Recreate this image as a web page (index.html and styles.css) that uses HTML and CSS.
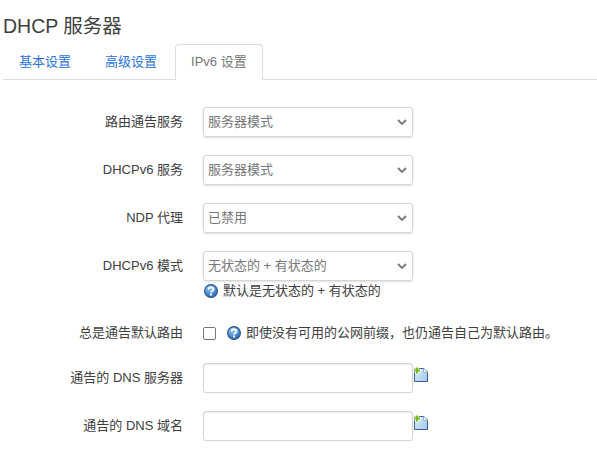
FILE: index.html
```html
<!DOCTYPE html>
<html lang="zh">
<head>
<meta charset="utf-8">
<title>DHCP 服务器</title>
<link rel="stylesheet" href="styles.css">
</head>
<body>
<h2 class="title">DHCP 服务器</h2>
<ul class="tabs">
  <li class="tab"><a href="#">基本设置</a></li>
  <li class="tab"><a href="#">高级设置</a></li>
  <li class="tab active"><a href="#">IPv6 设置</a></li>
</ul>
<div class="form">
  <div class="row">
    <label class="label">路由通告服务</label>
    <div class="field"><select class="select"><option>服务器模式</option></select></div>
  </div>
  <div class="row">
    <label class="label">DHCPv6 服务</label>
    <div class="field"><select class="select"><option>服务器模式</option></select></div>
  </div>
  <div class="row">
    <label class="label">NDP 代理</label>
    <div class="field"><select class="select"><option>已禁用</option></select></div>
  </div>
  <div class="row row-hint">
    <label class="label">DHCPv6 模式</label>
    <div class="field">
      <select class="select"><option>无状态的 + 有状态的</option></select>
      <div class="hint">
        <svg class="help help-hint" viewBox="0 0 14 14">
          <circle cx="7" cy="7" r="6.4" fill="url(#qg)" stroke="#24558f" stroke-width="1.1"/>
          <path d="M4.6 5.6c0-1.5 1.1-2.2 2.4-2.2 1.4 0 2.5.8 2.5 2 0 1.6-2.4 1.6-2.4 3.2" fill="none" stroke="#fff" stroke-width="1.7"/>
          <rect x="6" y="9.5" width="2" height="2" fill="#fff"/>
        </svg>
        <span>默认是无状态的 + 有状态的</span>
      </div>
    </div>
  </div>
  <div class="row row-check">
    <label class="label">总是通告默认路由</label>
    <div class="field check-field">
      <input class="check" type="checkbox">
      <svg class="help" viewBox="0 0 14 14">
        <circle cx="7" cy="7" r="6.4" fill="url(#qg)" stroke="#24558f" stroke-width="1.1"/>
        <path d="M4.6 5.6c0-1.5 1.1-2.2 2.4-2.2 1.4 0 2.5.8 2.5 2 0 1.6-2.4 1.6-2.4 3.2" fill="none" stroke="#fff" stroke-width="1.7"/>
        <rect x="6" y="9.5" width="2" height="2" fill="#fff"/>
      </svg>
      <span>即使没有可用的公网前缀，也仍通告自己为默认路由。</span>
    </div>
  </div>
  <div class="row">
    <label class="label">通告的 DNS 服务器</label>
    <div class="field add-field">
      <input class="text" type="text">
      <svg class="add" viewBox="0 0 16 16">
        <path d="M1.5 1.5H11L14.5 5V14.5H1.5Z" fill="url(#ag)" stroke="#3f5f8a" stroke-width="1"/>
        <path d="M10.5 1.5V5.5H14.5" fill="#f2f8fe" stroke="#8aa6c8" stroke-width="0.8"/>
        <path d="M4 0V7M0.5 3.5H7.5" stroke="#fff" stroke-width="3.4"/>
        <path d="M4 0.5V6.5M1 3.5H7" stroke="#7cbc1a" stroke-width="2.2"/>
      </svg>
    </div>
  </div>
  <div class="row">
    <label class="label">通告的 DNS 域名</label>
    <div class="field add-field">
      <input class="text" type="text">
      <svg class="add" viewBox="0 0 16 16">
        <path d="M1.5 1.5H11L14.5 5V14.5H1.5Z" fill="url(#ag)" stroke="#3f5f8a" stroke-width="1"/>
        <path d="M10.5 1.5V5.5H14.5" fill="#f2f8fe" stroke="#8aa6c8" stroke-width="0.8"/>
        <path d="M4 0V7M0.5 3.5H7.5" stroke="#fff" stroke-width="3.4"/>
        <path d="M4 0.5V6.5M1 3.5H7" stroke="#7cbc1a" stroke-width="2.2"/>
      </svg>
    </div>
  </div>
</div>
<svg class="defs" width="0" height="0">
  <defs>
    <radialGradient id="qg" cx="0.4" cy="0.25" r="0.85">
      <stop offset="0" stop-color="#a9cdf0"/>
      <stop offset="0.55" stop-color="#528fd2"/>
      <stop offset="1" stop-color="#23609f"/>
    </radialGradient>
    <linearGradient id="ag" x1="0" y1="0" x2="1" y2="1">
      <stop offset="0" stop-color="#e4f1fc"/>
      <stop offset="1" stop-color="#9cc8f0"/>
    </linearGradient>
  </defs>
</svg>
</body>
</html>
```
FILE: styles.css
```css
* { box-sizing: border-box; }
html, body { margin: 0; padding: 0; background: #fff; overflow: hidden; }
body {
  font-family: "Liberation Sans", "Noto Sans CJK SC", sans-serif;
  font-size: 13px;
  line-height: 18px;
  color: #404040;
  padding: 0 0 0 3px;
  height: 461px;
}
.title {
  margin: 0;
  padding-top: 13px;
  height: 44px;
  font-size: 19.5px;
  line-height: 26px;
  font-weight: 400;
  color: #404040;
}
.tabs {
  list-style: none;
  margin: 0;
  padding: 0;
  display: flex;
  height: 36px;
  border-bottom: 1px solid #ddd;
}
.tab { height: 36px; margin-right: 2px; }
.tab a {
  display: block;
  height: 36px;
  padding: 8px 15px 0;
  color: #2a72de;
  text-decoration: none;
  border: 1px solid transparent;
  border-bottom: 0;
  border-radius: 4px 4px 0 0;
}
.tab.active a {
  color: #777;
  background: #fff;
  border-color: #ddd;
}
.form { padding-top: 27px; display: flex; flex-direction: column; }
.row { display: flex; align-items: flex-start; min-height: 30px; margin-bottom: 18px; }
.row-hint { margin-bottom: 21px; }
.row-check { min-height: 24px; margin-bottom: 18px; }
.label {
  width: 180px;
  flex: none;
  text-align: right;
  line-height: 30px;
  color: #404040;
}
.row-check .label { line-height: 24px; }
.field { margin-left: 20px; }
.select {
  display: block;
  appearance: none;
  width: 210px;
  height: 30px;
  padding: 0 4px;
  font: inherit;
  color: #777;
  background-color: #fff;
  background-image: url("data:image/svg+xml,%3Csvg xmlns='http://www.w3.org/2000/svg' width='10' height='6'%3E%3Cpath d='M1 1l4 4 4-4' fill='none' stroke='%23777' stroke-width='1.8'/%3E%3C/svg%3E");
  background-repeat: no-repeat;
  background-position: right 5px center;
  border: 1px solid #d4d4d4;
  border-radius: 3px;
  box-shadow: 0 1px 2px rgba(0,0,0,.12);
}
.hint { display: flex; align-items: center; height: 18px; margin-top: 1px; color: #404040; }
.help { width: 14px; height: 14px; flex: none; margin-right: 5px; }
.help-hint { margin-left: 1px; }
.check-field { display: flex; align-items: center; height: 24px; }
.check {
  appearance: none;
  width: 13px;
  height: 13px;
  margin: 0 11px 0 0;
  border: 1px solid #767676;
  border-radius: 2px;
  background: #fff;
}
.add-field { display: flex; align-items: flex-start; }
.text {
  display: block;
  width: 210px;
  height: 30px;
  border: 1px solid #d4d4d4;
  border-radius: 3px;
  background: #fff;
  box-shadow: inset 0 1px 1px rgba(0,0,0,.075);
}
.add { width: 16px; height: 16px; flex: none; margin-top: 4px; }
.defs { position: absolute; }
```
